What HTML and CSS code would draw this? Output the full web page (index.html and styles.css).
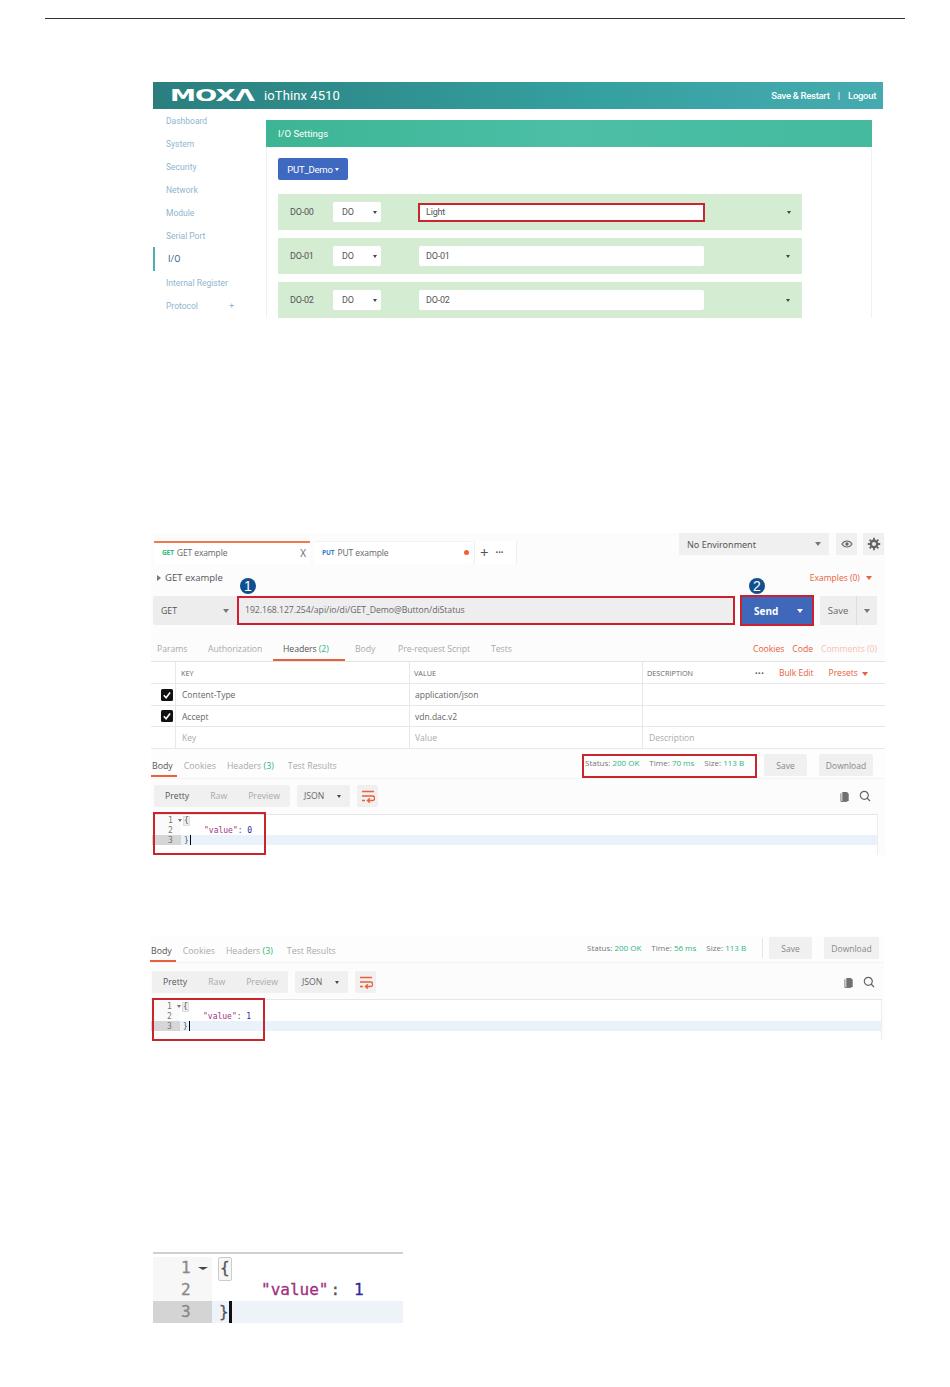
FILE: index.html
```html
<!DOCTYPE html>
<html lang="en">
<head>
<meta charset="utf-8">
<title>ioThinx 4510 API</title>
<link rel="stylesheet" href="styles.css">
</head>
<body>
<svg class="defs" width="0" height="0" aria-hidden="true">
  <symbol id="i-wrap" viewBox="0 0 14 14"><path d="M1 2.500h12M1 7h10.500a2 2 0 0 1 0 4.500H7M8.800 9.300 6.500 11.500l2.300 2.200M1 11.500h3" fill="none" stroke="#e8603c" stroke-width="1.400"/></symbol>
  <symbol id="i-copy" viewBox="0 0 12 12"><path d="M2.500 1h5l2 2v8h-7z" fill="#707070"/><path d="M1 2.500v9h7" fill="none" stroke="#707070"/></symbol>
  <symbol id="i-search" viewBox="0 0 12 12"><circle cx="5.300" cy="5.300" r="4" fill="none" stroke="#666" stroke-width="1.200"/><path d="m8 8 3 3" stroke="#666" stroke-width="1.200"/></symbol>
  <symbol id="i-check" viewBox="0 0 12 12"><rect width="12" height="12" rx="1.500" fill="#111"/><path d="m2.800 6.200 2.300 2.500 4-5.200" fill="none" stroke="#fff" stroke-width="1.600"/></symbol>
</svg>

<header class="page-rule"></header>

<section class="moxa">
  <div class="moxa-bar">
    <span class="moxa-logo">MOXΛ</span>
    <span class="moxa-name">ioThinx 4510</span>
    <span class="moxa-links">Save &amp; Restart &nbsp;&nbsp;&nbsp;|&nbsp;&nbsp;&nbsp; Logout</span>
  </div>
  <div class="moxa-body">
    <nav class="moxa-nav">
      <a>Dashboard</a><a>System</a><a>Security</a><a>Network</a><a>Module</a><a>Serial Port</a>
      <a class="is-active">I/O</a><a>Internal Register</a>
      <a class="nav-plus"><span>Protocol</span><span>+</span></a>
    </nav>
    <div class="moxa-card">
      <div class="card-title">I/O Settings</div>
      <div class="card-body">
        <button class="demo-btn">PUT_Demo <i class="tri tri-white"></i></button>
        <div class="io-row">
          <span class="io-id">DO-00</span>
          <span class="io-sel">DO<i class="tri tri-dark"></i></span>
          <span class="io-input is-marked">Light</span>
          <i class="tri tri-dark io-tri"></i>
        </div>
        <div class="io-row">
          <span class="io-id">DO-01</span>
          <span class="io-sel">DO<i class="tri tri-dark"></i></span>
          <span class="io-input">DO-01</span>
          <i class="tri tri-dark io-tri"></i>
        </div>
        <div class="io-row">
          <span class="io-id">DO-02</span>
          <span class="io-sel">DO<i class="tri tri-dark"></i></span>
          <span class="io-input">DO-02</span>
          <i class="tri tri-dark io-tri"></i>
        </div>
      </div>
    </div>
  </div>
</section>

<section class="pm pm-first">
  <div class="tabrow">
    <div class="tab tab-on"><b class="m-get">GET</b><span>GET example</span><span class="tab-x">X</span></div>
    <div class="tab tab-off"><b class="m-put">PUT</b><span>PUT example</span><i class="dot"></i></div>
    <div class="tab-tools"><span class="plus">+</span><span class="more">•••</span></div>
    <div class="env">
      <span class="env-sel">No Environment<i class="tri tri-grey"></i></span>
      <span class="env-btn"><svg width="12" height="10" viewBox="0 0 12 10"><path d="M1 5c2.500-4 7.500-4 10 0-2.500 4-7.500 4-10 0z" fill="none" stroke="#666" stroke-width="1.100"/><circle cx="6" cy="5" r="1.700" fill="#666"/></svg></span>
      <span class="env-btn"><svg width="14" height="14" viewBox="0 0 14 14"><circle cx="7" cy="7" r="3.200" fill="none" stroke="#666" stroke-width="2.400"/><path d="M7 .8v2.400M7 10.800v2.400M.8 7h2.400M10.800 7h2.400M2.600 2.600l1.700 1.700M9.700 9.700l1.700 1.700M2.600 11.400l1.700-1.700M9.700 4.300l1.700-1.700" stroke="#666" stroke-width="1.800"/></svg></span>
    </div>
  </div>
  <div class="reqname">
    <span><i class="tri-right"></i>GET example</span>
    <span class="examples">Examples (0) <i class="tri tri-orange"></i></span>
  </div>
  <div class="urlrow">
    <span class="method">GET<i class="tri tri-grey"></i></span>
    <span class="url">192.168.127.254/api/io/di/GET_Demo@Button/diStatus</span>
    <span class="send"><b>Send</b><i class="tri tri-white"></i></span>
    <span class="save-split"><span>Save</span><span class="save-arrow"><i class="tri tri-grey"></i></span></span>
    <span class="badge badge-1">1</span>
    <span class="badge badge-2">2</span>
  </div>
  <div class="reqtabs">
    <span class="rt rt-params">Params</span>
    <span class="rt rt-auth">Authorization</span>
    <span class="rt rt-headers">Headers <em>(2)</em></span>
    <span class="rt rt-body">Body</span>
    <span class="rt rt-pre">Pre-request Script</span>
    <span class="rt">Tests</span>
    <span class="rt-right"><span>Cookies</span><span>Code</span><span class="faint">Comments (0)</span></span>
  </div>
  <div class="htable">
    <div class="hrow hhead">
      <span class="hc hc-check"></span><span class="hc">KEY</span><span class="hc">VALUE</span>
      <span class="hc hc-desc"><span>DESCRIPTION</span><span class="hactions"><b>•••</b><span class="act-bulk">Bulk Edit</span><span class="act-pre">Presets <i class="tri tri-orange"></i></span></span></span>
    </div>
    <div class="hrow">
      <span class="hc hc-check"><svg width="12" height="12"><use href="#i-check"/></svg></span><span class="hc">Content-Type</span><span class="hc">application/json</span><span class="hc"></span>
    </div>
    <div class="hrow hrow-short">
      <span class="hc hc-check"><svg width="12" height="12"><use href="#i-check"/></svg></span><span class="hc">Accept</span><span class="hc">vdn.dac.v2</span><span class="hc"></span>
    </div>
    <div class="hrow hrow-ph">
      <span class="hc hc-check"></span><span class="hc">Key</span><span class="hc">Value</span><span class="hc">Description</span>
    </div>
  </div>

  <div class="resbar">
    <span class="rb rb-on">Body</span><span class="rb">Cookies</span><span class="rb rb-hdr">Headers <em>(3)</em></span><span class="rb">Test Results</span>
    <div class="stats"><span>Status: <em>200 OK</em></span><span>Time: <em>70 ms</em></span><span>Size: <em>113 B</em></span></div>
    <span class="btn-grey btn-save">Save</span><span class="btn-grey btn-dl">Download</span>
    <span class="mark mark-status"></span>
  </div>
  <div class="toolbar">
    <div class="viewgroup"><span class="v-on">Pretty</span><span>Raw</span><span>Preview</span></div>
    <span class="fmt">JSON<i class="tri tri-dark"></i></span>
    <span class="wrap"><svg width="14" height="14"><use href="#i-wrap"/></svg></span>
    <span class="tool-icons"><svg width="11" height="11"><use href="#i-copy"/></svg><svg width="12" height="12"><use href="#i-search"/></svg></span>
  </div>
  <div class="code">
    <div class="cl"><span class="gut">1 <i class="tri tri-grey tri-s"></i></span><span class="src"><span class="brace">{</span></span></div>
    <div class="cl"><span class="gut">2</span><span class="src src-in"><span class="str">"value"</span>: <span class="num">0</span></span></div>
    <div class="cl cl-on"><span class="gut">3</span><span class="src">}<i class="caret"></i></span></div>
    <span class="mark mark-code"></span>
  </div>
</section>

<section class="pm pm-second">
  <div class="resbar">
    <span class="rb rb-on">Body</span><span class="rb">Cookies</span><span class="rb rb-hdr">Headers <em>(3)</em></span><span class="rb">Test Results</span>
    <div class="stats"><span>Status: <em>200 OK</em></span><span>Time: <em>56 ms</em></span><span>Size: <em>113 B</em></span></div>
    <i class="resbar-sep"></i>
    <span class="btn-grey btn-save">Save</span><span class="btn-grey btn-dl">Download</span>
  </div>
  <div class="toolbar">
    <div class="viewgroup"><span class="v-on">Pretty</span><span>Raw</span><span>Preview</span></div>
    <span class="fmt">JSON<i class="tri tri-dark"></i></span>
    <span class="wrap"><svg width="14" height="14"><use href="#i-wrap"/></svg></span>
    <span class="tool-icons"><svg width="11" height="11"><use href="#i-copy"/></svg><svg width="12" height="12"><use href="#i-search"/></svg></span>
  </div>
  <div class="code">
    <div class="cl"><span class="gut">1 <i class="tri tri-grey tri-s"></i></span><span class="src"><span class="brace">{</span></span></div>
    <div class="cl"><span class="gut">2</span><span class="src src-in"><span class="str">"value"</span>: <span class="num">1</span></span></div>
    <div class="cl cl-on"><span class="gut">3</span><span class="src">}<i class="caret"></i></span></div>
    <span class="mark mark-code"></span>
  </div>
</section>

<section class="bigcode">
  <div class="bl"><span class="bgut">1 <i class="tri tri-dark tri-b"></i></span><span class="bsrc"><span class="bbrace">{</span></span></div>
  <div class="bl"><span class="bgut">2</span><span class="bsrc bsrc-in"><span class="str">"value"</span><span class="bcolon">:</span><span class="num">1</span></span></div>
  <div class="bl bl-on"><span class="bgut">3</span><span class="bsrc">}<i class="bcaret"></i></span></div>
</section>
</body>
</html>
```

FILE: styles.css
```css
* { box-sizing: border-box; }
html, body { margin: 0; padding: 0; }
body { background: #fff; font-family: "Open Sans", "Liberation Sans", sans-serif; color: #555; height: 1387px; overflow: hidden; }
.defs { position: absolute; }
em { font-style: normal; color: #2eb67d; }

.page-rule { height: 19px; margin: 0 45px; border-bottom: 1px solid #333; }

/* triangles */
.tri { display: inline-block; width: 0; height: 0; border-left: 3px solid transparent; border-right: 3px solid transparent; border-top: 4px solid #666; vertical-align: middle; }
.tri-white { border-top-color: #fff; border-left-width: 2px; border-right-width: 2px; border-top-width: 3px; }
.tri-dark { border-top-color: #444; border-left-width: 2px; border-right-width: 2px; border-top-width: 3px; }
.tri-grey { border-top-color: #777; }
.tri-orange { border-top-color: #e8603c; }
.tri-s { border-left-width: 2px; border-right-width: 2px; border-top-width: 3px; }
.tri-b { border-left-width: 5px; border-right-width: 5px; border-top-width: 3px; }
.tri-right { display: inline-block; width: 0; height: 0; border-top: 3px solid transparent; border-bottom: 3px solid transparent; border-left: 4px solid #777; margin-right: 4px; }

/* Moxa figure */
.moxa { width: 730px; height: 236px; margin: 63px 0 0 153px; overflow: hidden; font-family: Roboto, "Liberation Sans", sans-serif; }
.moxa-bar { height: 27px; display: flex; align-items: center; background: linear-gradient(90deg, #2a7f7e, #35a0a0 60%, #46abb0); color: #fff; padding: 0 7px 0 17px; }
.moxa-logo { font: bold 15px "DejaVu Sans", sans-serif; width: 94px; display: inline-block; transform: scaleX(1.74); transform-origin: left center; letter-spacing: -0.5px; white-space: nowrap; }
.moxa-name { font-size: 13px; letter-spacing: 0.1px; margin-top: -1px; }
.moxa-links { margin-left: auto; font-size: 9.500px; font-weight: 500; letter-spacing: -0.3px; margin-top: -1px; }
.moxa-body { display: flex; height: 209px; }
.moxa-nav { width: 113px; display: flex; flex-direction: column; }
.moxa-nav a { height: 23px; display: flex; align-items: center; padding-left: 13px; font-size: 8.500px; color: #8fb6d0; flex: none; }
.moxa-nav .is-active { padding-left: 13px; color: #3a6a94; border-left: 2px solid #4ab0b0; font-size: 9px; height: 24px; }
.moxa-nav .nav-plus { justify-content: space-between; padding-right: 32px; }
.moxa-card { width: 606px; height: 240px; flex: none; margin-top: 11px; border: 1px solid #eef2f2; border-top: 0; }
.card-title { height: 27px; margin: 0 -1px; padding-left: 12px; display: flex; align-items: center; background: linear-gradient(90deg, #3db594, #4cbfa6 50%, #45ba9e); color: #fff; font-size: 9.500px; }
.card-body { padding: 11px 11px 0; }
.demo-btn { display: block; width: 70px; height: 22px; padding: 0; background: #3f68c0; color: #fff; border: 0; border-radius: 2px; font: 9.500px Roboto, sans-serif; letter-spacing: -0.2px; }
.io-row { width: 524px; height: 36px; margin-top: 8px; background: #d3ecd2; display: flex; align-items: center; font-size: 9px; color: #555; padding-left: 12px; letter-spacing: -0.2px; }
.demo-btn + .io-row { margin-top: 14px; }
.io-id { width: 43px; }
.io-sel { width: 48px; height: 20px; background: #fff; border-radius: 2px; display: flex; align-items: center; justify-content: space-between; padding: 0 4px 0 9px; }
.io-input { width: 285px; height: 20px; margin-left: 38px; background: #fff; border-radius: 2px; display: flex; align-items: center; padding-left: 7px; }
.io-input.is-marked { padding-left: 6px; border: 2px solid #c9252f; margin-left: 37px; width: 287px; height: 19px; border-radius: 0; }
.io-tri { margin-left: 82px; }

/* Postman figures */
.pm { position: relative; width: 734px; background: #fcfcfc; margin-left: 151px; font-size: 8.700px; }
.pm-first { margin-top: 215px; height: 322px; }
.pm-second { margin-top: 80px; left: -1px; height: 105px; }

.tabrow { height: 31px; display: flex; align-items: flex-end; padding-left: 3px; }
.tab { height: 23px; padding-bottom: 2px; display: flex; align-items: center; gap: 3px; padding-left: 8px; font-size: 8.500px; letter-spacing: -0.1px; color: #666; background: #fff; }
.tab b { font-size: 6.500px; }
.m-get { color: #2eb67d; }
.m-put { color: #2f80c8; }
.tab-on { width: 156px; border-top: 2px solid #f07a50; }
.tab-off { width: 157px; margin-left: 4px; border-top: 1px solid #f2f2f2; }
.tab-x { margin-left: auto; margin-right: 4px; font-size: 10px; }
.dot { width: 5px; height: 5px; border-radius: 50%; background: #f0622e; margin-left: auto; margin-right: 2px; }
.tab-tools { width: 43px; height: 23px; margin-left: 3px; display: flex; align-items: center; gap: 7px; padding-left: 5px; background: #fff; border-left: 1px solid #f0f0f0; border-right: 1px solid #f0f0f0; }
.plus { font-size: 15px; color: #555; line-height: 1; }
.more { font-size: 7px; letter-spacing: 0; color: #555; }
.env { position: absolute; top: 0; left: 528px; width: 206px; height: 24px; display: flex; gap: 7px; align-items: flex-start; }
.env-sel { width: 150px; height: 22px; background: #f0f0f0; display: flex; align-items: center; justify-content: space-between; padding: 0 8px; font-size: 9px; color: #555; font-family: "Noto Sans", sans-serif; }
.env-btn { width: 21px; height: 22px; background: #f0f0f0; display: flex; align-items: center; justify-content: center; margin-right: -1px; }

.reqname { height: 26px; display: flex; align-items: center; justify-content: space-between; padding: 0 13px 0 6px; font-size: 9.500px; color: #555; }
.examples { color: #e8603c; font-size: 8.500px; }
.examples .tri { margin-left: 4px; }

.urlrow { position: relative; height: 29px; margin-top: 6px; display: flex; padding-left: 2px; }
.method { width: 84px; background: #ededed; display: flex; align-items: center; justify-content: space-between; padding: 0 8px; color: #555; border-radius: 2px 0 0 2px; }
.url { width: 498px; background: #eee; border: 2px solid #cc2030; padding: 0 0 2px 6px; display: flex; align-items: center; color: #666; font-size: 8.700px; letter-spacing: -0.05px; }
.send { width: 74px; margin-left: 5px; margin-top: -1px; height: 31px; background: #3f68bb; border: 2px solid #cc2030; color: #fff; display: flex; align-items: center; justify-content: space-between; padding: 0 9px 0 12px; font-size: 10px; }
.send .tri { border-left-width: 3px; border-right-width: 3px; border-top-width: 4px; }
.save-split { width: 57px; margin-left: 6px; background: #eee; display: flex; font-size: 9.500px; color: #666; }
.save-split > span:first-child { flex: 1; display: flex; align-items: center; justify-content: center; }
.save-arrow { width: 21px; display: flex; align-items: center; justify-content: center; border-left: 1px solid #ddd; }
.badge { position: absolute; top: -18px; width: 16px; height: 16px; border-radius: 50%; background: #11508f; color: #fff; font: 14px/16px "Liberation Sans", sans-serif; text-align: center; }
.badge-1 { left: 89px; }
.badge-2 { left: 598px; }

.reqtabs { height: 36px; padding: 17px 8px 0 6px; display: flex; align-items: flex-start; color: #aaa; font-size: 8.700px; position: relative; letter-spacing: -0.05px; }
.rt { line-height: 14px; }
.rt-params { width: 51px; }
.rt-auth { width: 75px; }
.rt-headers { width: 72px; color: #555; }
.rt-body { width: 43px; }
.rt-pre { width: 93px; }
.rt-headers::after { content: ""; position: absolute; left: 122px; width: 72px; top: 34px; height: 2px; background: #e8603c; }
.rt-right { margin-left: auto; display: flex; gap: 8px; color: #e8603c; line-height: 14px; }
.faint { color: #f4c2b0; }

.htable { border-top: 1px solid #e4e4e4; font-size: 8.500px; background: #fff; }
.hrow { display: grid; grid-template-columns: 24px 234px 233px 1fr; height: 22px; border-bottom: 1px solid #e8e8e8; color: #666; }
.hrow-short { height: 21px; }
.hhead { font-size: 7.300px; }
.hrow-ph { color: #aaa; height: 22px; }
.hc { display: flex; align-items: center; padding-left: 6px; border-left: 1px solid #e8e8e8; }
.hc:nth-child(3) { padding-left: 5px; }
.hhead .hc { padding-left: 5px; }
.hhead .hc:nth-child(3) { padding-left: 4px; }
.hhead .hc-desc { padding-left: 4px; }
.hc-check { border-left: 0; padding-left: 10px; }
.hc-desc { justify-content: space-between; padding-right: 15px; }
.hactions { display: flex; gap: 15px; font-size: 8.500px; color: #e8603c; align-items: center; margin-right: 2px; }
.hactions b { color: #666; font-size: 8px; font-weight: normal; letter-spacing: 0; }
.act-pre .tri { margin-left: 2px; }

.resbar { position: relative; height: 30px; display: flex; align-items: center; font-size: 8.800px; color: #aaa; background: #fdfdfd; border-bottom: 1px solid #f4f4f4; padding-left: 1px; }
.rb { margin-right: 11px; margin-top: 4px; }
.rb-hdr { margin-right: 14px; }
.rb-on { color: #555; position: relative; }
.rb-on::after { content: ""; position: absolute; left: -1px; right: -4px; top: 15px; height: 2px; background: #e8603c; }
.stats { display: flex; gap: 10px; font-size: 8px; color: #777; position: absolute; left: 434px; top: 6px; line-height: 16px; }
.btn-grey { position: absolute; top: 5px; height: 22px; background: #f0f0f0; color: #888; display: flex; align-items: center; justify-content: center; font-size: 8.500px; border-radius: 2px; }
.btn-save { left: 613px; width: 43px; }
.btn-dl { left: 668px; width: 54px; }
.resbar-sep { position: absolute; left: 612px; top: 3px; width: 1px; height: 20px; background: #e4e4e4; }
.mark { position: absolute; border: 2px solid #c9252f; pointer-events: none; }
.mark-status { left: 431px; top: 5px; width: 175px; height: 24px; }

.toolbar { height: 22px; margin-top: 6px; display: flex; align-items: center; padding-left: 3px; position: relative; color: #aaa; }
.viewgroup { width: 136px; height: 22px; background: #f0f0f0; display: flex; align-items: center; gap: 21px; padding-left: 11px; border-radius: 2px; font-size: 8.700px; }
.v-on { color: #555; }
.fmt { width: 53px; height: 22px; margin-left: 7px; background: #f0f0f0; display: flex; align-items: center; justify-content: space-between; padding: 0 9px 0 7px; color: #666; border-radius: 2px; }
.wrap { width: 21px; height: 22px; margin-left: 7px; background: #f0f0f0; display: flex; align-items: center; justify-content: center; border-radius: 2px; }
.tool-icons { position: absolute; left: 689px; display: flex; gap: 8px; align-items: center; }

.code { position: relative; width: 726px; height: 41px; margin: 7px 0 0 1px; border-top: 1px solid #e6e6e6; border-right: 1px solid #eee; font: 8px/12px "DejaVu Sans Mono", monospace; background: #fff; }
.cl { display: flex; height: 10px; color: #555; }
.gut { width: 29px; height: 10px; padding-left: 16px; color: #777; background: #fafafa; white-space: nowrap; }
.src { padding-left: 3px; }
.src-in { padding-left: 23px; }
.brace { background: #eee; border: 1px solid #ddd; margin-left: -1px; line-height: 8px; display: inline-block; }
.str { color: #a0307f; }
.num { color: #2a2a9a; }
.cl-on { background: #e9f1fb; }
.cl-on .gut { background: #d6d6d6; }
.caret { display: inline-block; width: 1px; height: 10px; background: #000; margin-left: 1px; vertical-align: top; }
.mark-code { left: 1px; top: -3px; width: 113px; height: 43px; }

.pm-second .resbar { height: 28px; }
.pm-second .stats { left: 437px; top: 5px; }
.pm-second .btn-grey { top: 2px; }
.pm-second .btn-save { left: 619px; }
.pm-second .btn-dl { left: 674px; width: 55px; }
.pm-second .toolbar { margin-top: 8px; padding-left: 2px; }
.pm-second .tool-icons { left: 694px; }
.pm-second .code { width: 731px; margin-top: 6px; padding-top: 1px; }
.pm-second .mark-code { top: -2px; }

/* Zoomed code figure */
.bigcode { width: 250px; height: 78px; margin: 212px 0 0 153px; border-top: 2px solid #d0d0d0; padding-top: 3px; font: 16px/22px "DejaVu Sans Mono", monospace; -webkit-text-stroke: 0.3px; }
.bl { display: flex; height: 22px; }
.bgut { width: 59px; padding-left: 28px; background: #f7f7f7; color: #888; white-space: nowrap; }
.bgut .tri { vertical-align: middle; margin-left: -2px; }
.bsrc { padding-left: 7px; color: #555; }
.bsrc-in { padding-left: 49px; }
.bcolon { margin: 0 14px 0 2px; }
.bbrace { display: inline-block; border: 1px solid #ccc; border-radius: 2px; background: #f6f6f6; margin-left: -1px; padding: 0 1px; line-height: 20px; height: 24px; }
.bl-on { background: #eef3fa; }
.bl-on .bgut { background: #d4d4d4; }
.bcaret { display: inline-block; width: 3px; height: 22px; background: #111; vertical-align: top; }
```
